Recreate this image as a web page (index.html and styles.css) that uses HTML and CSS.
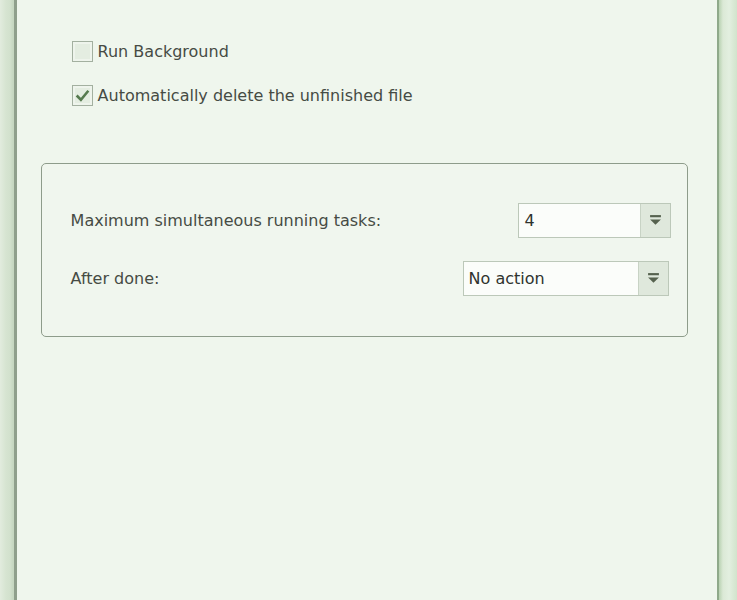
FILE: index.html
```html
<!DOCTYPE html>
<html>
<head>
<meta charset="utf-8">
<link rel="stylesheet" href="styles.css">
</head>
<body>
<div class="window">
  <div class="edge edge-left"></div>
  <div class="content">
    <label class="check">
      <span class="box"></span>
      <span class="check-text">Run Background</span>
    </label>
    <label class="check">
      <span class="box checked">
        <svg viewBox="0 0 16 16" width="17" height="17"><path d="M2.5 8 L6.5 12 L13.5 3.5" fill="none" stroke="#557a4e" stroke-width="2.4"/></svg>
      </span>
      <span class="check-text">Automatically delete the unfinished file</span>
    </label>
    <div class="group">
      <div class="row row-tasks">
        <span class="label">Maximum simultaneous running tasks:</span>
        <div class="combo combo-small">
          <span class="combo-value">4</span>
          <span class="combo-btn"><svg viewBox="0 0 12 10" width="13" height="11"><rect x="1" y="0" width="10" height="2" fill="#56624f"/><path d="M1 4 H11 L6 9 Z" fill="#56624f"/></svg></span>
        </div>
      </div>
      <div class="row row-after">
        <span class="label">After done:</span>
        <div class="combo combo-wide">
          <span class="combo-value">No action</span>
          <span class="combo-btn"><svg viewBox="0 0 12 10" width="13" height="11"><rect x="1" y="0" width="10" height="2" fill="#56624f"/><path d="M1 4 H11 L6 9 Z" fill="#56624f"/></svg></span>
        </div>
      </div>
    </div>
  </div>
  <div class="edge edge-right"></div>
</div>
</body>
</html>
```
FILE: styles.css
```css
html, body {
  margin: 0;
  padding: 0;
  height: 100%;
}
body {
  background: #eef5ec;
  font-family: "DejaVu Sans", Verdana, sans-serif;
  font-size: 16px;
  color: #464b44;
}
.window {
  display: flex;
  height: 600px;
}
.edge-left {
  width: 14px;
  background: linear-gradient(to right, #e2ecde 0, #d6e4d1 6px, #d2e1cd 10px, #c6d7c1 13px);
  border-right: 3px solid #8f9f8c;
}
.edge-right {
  width: 19px;
  border-left: 2px solid #8fa98a;
  background: linear-gradient(to right, #b9d2b2 0, #dbe9d6 4px, #e3efe0 10px, #cfe2c9 19px);
}
.content {
  flex: 1;
  padding: 40px 29px 0 24px;
  display: flex;
  flex-direction: column;
  background: #eff6ed;
}
.check {
  display: flex;
  align-items: center;
  gap: 5px;
  margin-left: 31px;
  height: 23px;
}
.check + .check {
  margin-top: 21px;
}
.box {
  width: 19px;
  height: 19px;
  border: 1px solid #a3b0a0;
  background: #e4ede1;
  box-shadow: inset 0 0 0 2px #eef4ec;
  display: flex;
  align-items: center;
  justify-content: center;
  flex: none;
}
.check-text {
  font-size: 16px;
}
.group {
  margin-top: 56px;
  width: 647px;
  height: 174px;
  border: 1px solid #8e9c8b;
  border-radius: 5px;
  box-sizing: border-box;
  padding: 39px 16px 0 29px;
  display: flex;
  flex-direction: column;
  background: #f0f6ee;
}
.row {
  display: flex;
  align-items: center;
  justify-content: space-between;
}
.row-tasks {
  height: 35px;
}
.row-after {
  height: 35px;
  margin-top: 23px;
  padding-right: 2px;
}
.label {
  font-size: 16px;
}
.combo {
  display: flex;
  height: 35px;
  border: 1px solid #bcc8b9;
  box-sizing: border-box;
  background: #fbfdfa;
}
.combo-small {
  width: 153px;
}
.combo-wide {
  width: 206px;
}
.combo-value {
  flex: 1;
  display: flex;
  align-items: center;
  padding-left: 6px;
  font-size: 16px;
  color: #2f332e;
}
.combo-wide .combo-value {
  padding-left: 5px;
}
.combo-btn {
  width: 29px;
  border-left: 1px solid #c8d3c5;
  background: #dfe8dc;
  display: flex;
  align-items: center;
  justify-content: center;
}
```
